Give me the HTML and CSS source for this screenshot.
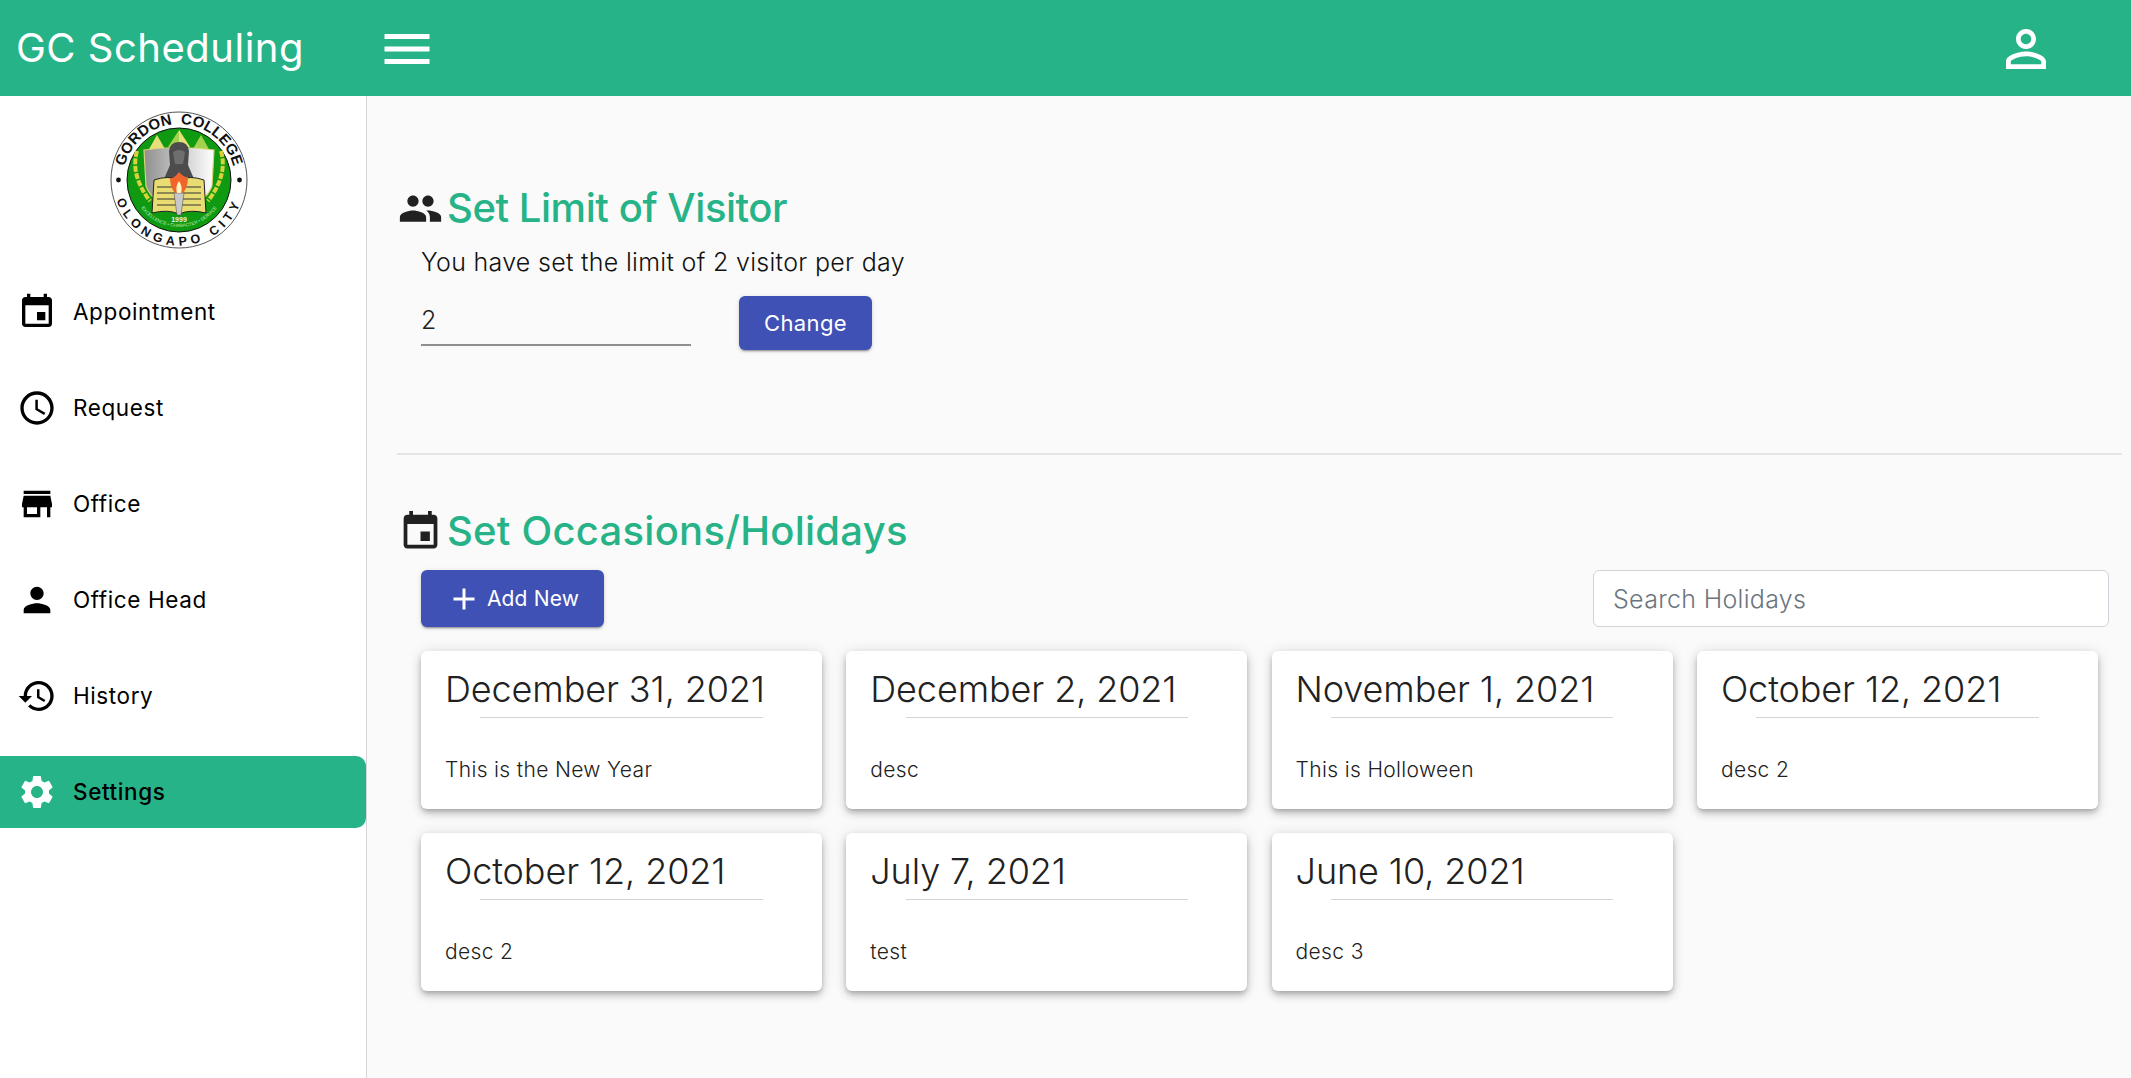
FILE: index.html
```html
<!DOCTYPE html>
<html>
<head>
    <title>GC Scheduling</title>
    <meta charset="utf-8">
    <link rel="stylesheet" href="styles.css">
</head>
<body>
    <header class="topbar">
        <div class="brand">GC Scheduling</div>
        <svg class="menu-icon" viewBox="0 0 24 24"><path d="M3 18h18v-2H3v2zm0-5h18v-2H3v2zm0-7v2h18V6H3z"/></svg>
        <svg class="profile-icon" viewBox="0 0 24 24"><path d="M12 5.9c1.16 0 2.1.94 2.1 2.1s-.94 2.1-2.1 2.1S9.9 9.16 9.9 8s.94-2.1 2.1-2.1m0 9c2.97 0 6.1 1.46 6.1 2.1v1.1H5.9V17c0-.64 3.13-2.1 6.1-2.1M12 4C9.79 4 8 5.79 8 8s1.79 4 4 4 4-1.79 4-4-1.79-4-4-4zm0 9c-2.67 0-8 1.34-8 4v3h16v-3c0-2.66-5.33-4-8-4z"/></svg>
    </header>

    <div class="layout">
        <aside class="sidebar">
            <div class="logo-wrap">
                <svg class="logo" viewBox="0 0 138 138">
                    <defs>
                        <path id="arc-top" d="M 13 69 A 56 56 0 0 1 125 69"/>
                        <path id="arc-bottom" d="M 3.5 69 A 65.5 65.5 0 0 0 134.5 69"/>
                        <path id="arc-motto" d="M 22 69 A 47 47 0 0 0 116 69"/>
                        <linearGradient id="shield-fill" x1="0" x2="1" y1="0" y2="0">
                            <stop offset="0" stop-color="#8f8f8f"/>
                            <stop offset="0.65" stop-color="#d8d8d8"/>
                            <stop offset="1" stop-color="#ffffff"/>
                        </linearGradient>
                    </defs>
                    <circle cx="69" cy="69" r="68" fill="#fff" stroke="#555" stroke-width="1"/>
                    <circle cx="69" cy="69" r="52" fill="#0f9a12" stroke="#111" stroke-width="1"/>
                    <text class="seal-top"><textPath href="#arc-top" startOffset="50%" text-anchor="middle">GORDON&#160;&#160;COLLEGE</textPath></text>
                    <text class="seal-bottom"><textPath href="#arc-bottom" startOffset="50%" text-anchor="middle">OLONGAPO CITY</textPath></text>
                    <circle cx="8.5" cy="69" r="2.4" fill="#111"/>
                    <circle cx="129.5" cy="69" r="2.4" fill="#111"/>
                    <path d="M38 40 L47 24 L55 38 Z" fill="#e6e07a"/>
                    <path d="M58 36 L69 19 L80 36 Z" fill="#a5d24e"/>
                    <path d="M83 38 L91 24 L100 40 Z" fill="#a5d24e"/>
                    <path d="M69 19 L69 36 L80 36 Z" fill="#e6e07a"/>
                    <path d="M34 39 Q69 34 104 39 L102 75 Q96 92 69 100 Q42 92 36 75 Z" fill="url(#shield-fill)" stroke="#d9d27a" stroke-width="1.2"/>
                    <path d="M54 68 L60 54 L59 40 Q60 31 69 31 Q78 31 79 40 L78 54 L84 68 Z" fill="#4c4c4c"/>
                    <path d="M63 41 Q69 37 75 41 L73 53 L65 53 Z" fill="#6e6e6e"/>
                    <path d="M27 40 Q20 64 40 90" fill="none" stroke="#d9d23a" stroke-width="4" stroke-dasharray="6 1.5"/>
                    <path d="M111 40 Q118 64 98 90" fill="none" stroke="#d9d23a" stroke-width="4" stroke-dasharray="6 1.5"/>
                    <path d="M44 69 Q58 64 69 69 Q80 64 94 69 L96 102 Q80 98 69 103 Q58 98 42 102 Z" fill="#e9dc72" stroke="#222" stroke-width="1"/>
                    <path d="M47 76 H66 M72 76 H91 M47 82 H66 M72 82 H91 M47 88 H66 M72 88 H91 M47 94 H66 M72 94 H91" stroke="#333" stroke-width="1"/>
                    <path d="M64 82 H74 L71 104 H67 Z" fill="#c8c8c8" stroke="#444" stroke-width="0.5"/>
                    <path d="M69 61 Q74 67 78 66 Q78 76 73 82 H65 Q60 76 60 67 Q64 68 69 61 Z" fill="#f0662a"/>
                    <path d="M69 70 Q73 76 71 82 H67 Q65 76 69 70 Z" fill="#fff3c0"/>
                    <text class="seal-year" x="69" y="111" text-anchor="middle">1999</text>
                    <text class="seal-motto"><textPath href="#arc-motto" startOffset="50%" text-anchor="middle">EXCELLENCE • CHARACTER • SERVICE</textPath></text>
                </svg>
            </div>
            <nav class="nav">
                <a class="nav-item">
                    <svg viewBox="0 0 24 24"><path d="M17 12h-5v5h5v-5zM16 1v2H8V1H6v2H5c-1.11 0-1.99.9-1.99 2L3 19c0 1.1.89 2 2 2h14c1.1 0 2-.9 2-2V5c0-1.1-.9-2-2-2h-1V1h-2zm3 18H5V8h14v11z"/></svg>
                    <span>Appointment</span>
                </a>
                <a class="nav-item">
                    <svg viewBox="0 0 24 24"><path d="M11.99 2C6.47 2 2 6.48 2 12s4.47 10 9.99 10C17.52 22 22 17.52 22 12S17.52 2 11.99 2zM12 20c-4.42 0-8-3.58-8-8s3.58-8 8-8 8 3.58 8 8-3.58 8-8 8zm.5-13H11v6l5.25 3.15.75-1.23-4.5-2.67z"/></svg>
                    <span>Request</span>
                </a>
                <a class="nav-item">
                    <svg viewBox="0 0 24 24"><path d="M20 4H4v2h16V4zm1 10v-2l-1-5H4l-1 5v2h1v6h10v-6h4v6h2v-6h1zm-9 4H6v-4h6v4z"/></svg>
                    <span>Office</span>
                </a>
                <a class="nav-item">
                    <svg viewBox="0 0 24 24"><path d="M12 12c2.21 0 4-1.79 4-4s-1.79-4-4-4-4 1.79-4 4 1.79 4 4 4zm0 2c-2.67 0-8 1.34-8 4v2h16v-2c0-2.66-5.33-4-8-4z"/></svg>
                    <span>Office Head</span>
                </a>
                <a class="nav-item">
                    <svg viewBox="0 0 24 24"><path d="M13 3c-4.97 0-9 4.03-9 9H1l3.89 3.89.07.14L9 12H6c0-3.87 3.13-7 7-7s7 3.13 7 7-3.13 7-7 7c-1.93 0-3.68-.79-4.94-2.06l-1.42 1.42C8.27 19.99 10.51 21 13 21c4.97 0 9-4.03 9-9s-4.03-9-9-9zm-1 5v5l4.28 2.54.72-1.21-3.5-2.08V8H12z"/></svg>
                    <span>History</span>
                </a>
                <a class="nav-item active">
                    <svg viewBox="0 0 24 24"><path d="M19.14 12.94c.04-.3.06-.61.06-.94 0-.32-.02-.64-.07-.94l2.03-1.58c.18-.14.23-.41.12-.61l-1.92-3.32c-.12-.22-.37-.29-.59-.22l-2.39.96c-.5-.38-1.03-.7-1.62-.94l-.36-2.54c-.04-.24-.24-.41-.48-.41h-3.84c-.24 0-.43.17-.47.41l-.36 2.54c-.59.24-1.13.57-1.62.94l-2.39-.96c-.22-.08-.47 0-.59.22L2.74 8.87c-.12.21-.08.47.12.61l2.03 1.58c-.05.3-.09.63-.09.94s.02.64.07.94l-2.03 1.58c-.18.14-.23.41-.12.61l1.92 3.32c.12.22.37.29.59.22l2.39-.96c.5.38 1.03.7 1.62.94l.36 2.54c.05.24.24.41.48.41h3.84c.24 0 .44-.17.47-.41l.36-2.54c.59-.24 1.13-.56 1.62-.94l2.39.96c.22.08.47 0 .59-.22l1.92-3.32c.12-.22.07-.47-.12-.61l-2.01-1.58zM12 15.6c-1.98 0-3.6-1.62-3.6-3.6s1.62-3.6 3.6-3.6 3.6 1.62 3.6 3.6-1.62 3.6-3.6 3.6z"/></svg>
                    <span>Settings</span>
                </a>
            </nav>
        </aside>

        <main class="main">
            <h2 class="section-title title-limit">
                <svg viewBox="0 0 24 24"><path d="M16 11c1.66 0 2.99-1.34 2.99-3S17.66 5 16 5c-1.66 0-3 1.34-3 3s1.34 3 3 3zm-8 0c1.66 0 2.99-1.34 2.99-3S9.66 5 8 5C6.34 5 5 6.34 5 8s1.34 3 3 3zm0 2c-2.33 0-7 1.17-7 3.5V19h14v-2.5c0-2.33-4.67-3.5-7-3.5zm8 0c-.29 0-.62.02-.97.05 1.16.84 1.97 1.97 1.97 3.45V19h6v-2.5c0-2.33-4.67-3.5-7-3.5z"/></svg>
                <span>Set Limit of Visitor</span>
            </h2>
            <div class="section-body">
                <p class="limit-text">You have set the limit of 2 visitor per day</p>
                <form class="limit-form">
                    <input class="limit-input" type="text" value="2">
                    <button class="btn btn-change" type="button">Change</button>
                </form>
            </div>

            <hr class="divider">

            <h2 class="section-title title-holidays">
                <svg viewBox="0 0 24 24"><path d="M17 12h-5v5h5v-5zM16 1v2H8V1H6v2H5c-1.11 0-1.99.9-1.99 2L3 19c0 1.1.89 2 2 2h14c1.1 0 2-.9 2-2V5c0-1.1-.9-2-2-2h-1V1h-2zm3 18H5V8h14v11z"/></svg>
                <span>Set Occasions/Holidays</span>
            </h2>
            <div class="section-body">
                <div class="toolbar">
                    <button class="btn btn-add" type="button">
                        <svg viewBox="0 0 24 24"><path d="M19 13h-6v6h-2v-6H5v-2h6V5h2v6h6v2z"/></svg>
                        <span>Add New</span>
                    </button>
                    <input class="search" type="text" placeholder="Search Holidays">
                </div>
                <div class="card-grid">
                    <div class="card">
                        <div class="card-date">December 31, 2021</div>
                        <hr class="card-rule">
                        <p class="card-desc">This is the New Year</p>
                    </div>
                    <div class="card">
                        <div class="card-date">December 2, 2021</div>
                        <hr class="card-rule">
                        <p class="card-desc">desc</p>
                    </div>
                    <div class="card">
                        <div class="card-date">November 1, 2021</div>
                        <hr class="card-rule">
                        <p class="card-desc">This is Holloween</p>
                    </div>
                    <div class="card">
                        <div class="card-date">October 12, 2021</div>
                        <hr class="card-rule">
                        <p class="card-desc">desc 2</p>
                    </div>
                    <div class="card">
                        <div class="card-date">October 12, 2021</div>
                        <hr class="card-rule">
                        <p class="card-desc">desc 2</p>
                    </div>
                    <div class="card">
                        <div class="card-date">July 7, 2021</div>
                        <hr class="card-rule">
                        <p class="card-desc">test</p>
                    </div>
                    <div class="card">
                        <div class="card-date">June 10, 2021</div>
                        <hr class="card-rule">
                        <p class="card-desc">desc 3</p>
                    </div>
                </div>
            </div>
        </main>
    </div>
</body>
</html>
```

FILE: styles.css
```css
* {
    box-sizing: border-box;
}
body {
    font-family: Inter, "Open Sans", sans-serif;
    background-color: #fafafa;
    color: #212121;
    margin: 0;
    height: 100vh;
    display: flex;
    flex-direction: column;
    overflow: hidden;
}

/* top bar */
.topbar {
    height: 96px;
    flex: none;
    background-color: #26b387;
    color: #fff;
    display: flex;
    align-items: center;
    padding-left: 16px;
}
.brand {
    width: 361px;
    font-size: 40px;
    font-weight: 400;
    letter-spacing: 0.5px;
    margin-top: -2px;
}
.menu-icon, .profile-icon {
    width: 60px;
    height: 60px;
    fill: #fff;
    margin-top: 2px;
}
.profile-icon {
    margin-left: auto;
    margin-right: 75px;
}

/* sidebar */
.layout {
    flex: 1;
    display: flex;
    min-height: 0;
}
.sidebar {
    width: 367px;
    flex: none;
    background-color: #fff;
    border-right: 1px solid #d6d6d6;
}
.logo-wrap {
    display: flex;
    justify-content: center;
    padding: 15px 9px 27px 0;
}
.logo {
    width: 138px;
    height: 138px;
    display: block;
}
.seal-top {
    font: bold 15px "Liberation Sans", sans-serif;
    fill: #111;
}
.seal-bottom {
    font: bold 12.5px "Liberation Sans", sans-serif;
    letter-spacing: 4.6px;
    fill: #111;
}
.seal-year {
    font: bold 7px "Liberation Sans", sans-serif;
    fill: #eee;
}
.seal-motto {
    font: 4.6px "Liberation Sans", sans-serif;
    fill: #bff0bf;
}
.nav {
    display: flex;
    flex-direction: column;
    gap: 24px;
}
.nav-item {
    height: 72px;
    display: flex;
    align-items: center;
    gap: 16px;
    padding-left: 17px;
    font-size: 22.5px;
    color: #000;
    border-radius: 0 10px 10px 0;
    letter-spacing: 0.6px;
}
.nav-item span {
    margin-top: -2px;
}
.nav-item svg {
    width: 40px;
    height: 40px;
    flex: none;
}
.nav-item.active {
    background-color: #26b387;
    font-weight: 500;
}
.nav-item.active svg {
    fill: #fff;
}

/* main area */
.main {
    flex: 1;
    padding: 83px 9px 0 30px;
}
.section-title {
    height: 56px;
    margin: 0;
    display: flex;
    align-items: center;
    gap: 4px;
    font-size: 40px;
    font-weight: 500;
    color: #26b387;
}
.section-title svg {
    width: 45px;
    height: 45px;
    flex: none;
    fill: #212121;
    margin-left: 1px;
    margin-top: 3px;
}
.title-limit span {
    letter-spacing: -0.45px;
}
.title-holidays span {
    letter-spacing: 0.25px;
}
.section-body {
    padding: 0 13px 0 24px;
}
.limit-text {
    margin: 9px 0 16px;
    line-height: 36px;
    font-size: 25px;
    font-weight: 300;
    letter-spacing: 0.3px;
    color: #111;
}
.limit-form {
    display: flex;
    gap: 48px;
}
.limit-input {
    width: 270px;
    height: 50px;
    border: 0;
    border-bottom: 2px solid #8f8f8f;
    background: transparent;
    padding: 0;
    font: 300 25px Inter, sans-serif;
    color: #212121;
    outline: none;
}
.btn {
    border: 0;
    border-radius: 6px;
    background-color: #3f51b5;
    color: #fff;
    font-family: Inter, sans-serif;
    box-shadow: 0 3px 1px -2px rgba(0, 0, 0, 0.2), 0 2px 2px 0 rgba(0, 0, 0, 0.14), 0 1px 5px 0 rgba(0, 0, 0, 0.12);
}
.btn-change {
    width: 133px;
    height: 54px;
    font-size: 22px;
    letter-spacing: 0.4px;
}
.btn-add {
    width: 183px;
    height: 57px;
    font-size: 21px;
    letter-spacing: 0.15px;
    display: flex;
    align-items: center;
    justify-content: center;
    gap: 5px;
}
.btn-add svg {
    width: 36px;
    height: 36px;
    fill: #fff;
    flex: none;
}
.divider {
    margin: 103px 0 47px;
    border: 0;
    border-top: 2px solid #e4e4e4;
}
.toolbar {
    display: flex;
    justify-content: space-between;
    margin-top: 12px;
}
.search {
    width: 516px;
    height: 57px;
    background-color: #fff;
    border: 1px solid #ced4da;
    border-radius: 6px;
    padding: 0 19px;
    font: 300 25px Inter, sans-serif;
    letter-spacing: 0.3px;
    outline: none;
}
.search::placeholder {
    color: #6c757d;
    opacity: 1;
}

/* holiday cards */
.card-grid {
    display: grid;
    grid-template-columns: repeat(4, 401px);
    column-gap: 24.3px;
    row-gap: 24px;
    margin-top: 24px;
}
.card {
    height: 158px;
    background-color: #fff;
    border-radius: 6px;
    padding: 14px 24px 0;
    box-shadow: 0 3px 5px -1px rgba(0, 0, 0, 0.2), 0 5px 8px 0 rgba(0, 0, 0, 0.14), 0 1px 14px 0 rgba(0, 0, 0, 0.12);
}
.card-date {
    font-size: 36px;
    font-weight: 300;
    line-height: 48px;
    letter-spacing: -0.1px;
}
.card-rule {
    width: 80%;
    margin: 4px auto 0;
    border: 0;
    border-top: 1px solid #d4d4d4;
}
.card-desc {
    margin: 38px 0 0;
    font-size: 21px;
    font-weight: 300;
    letter-spacing: 0.35px;
    line-height: 28px;
}
```
